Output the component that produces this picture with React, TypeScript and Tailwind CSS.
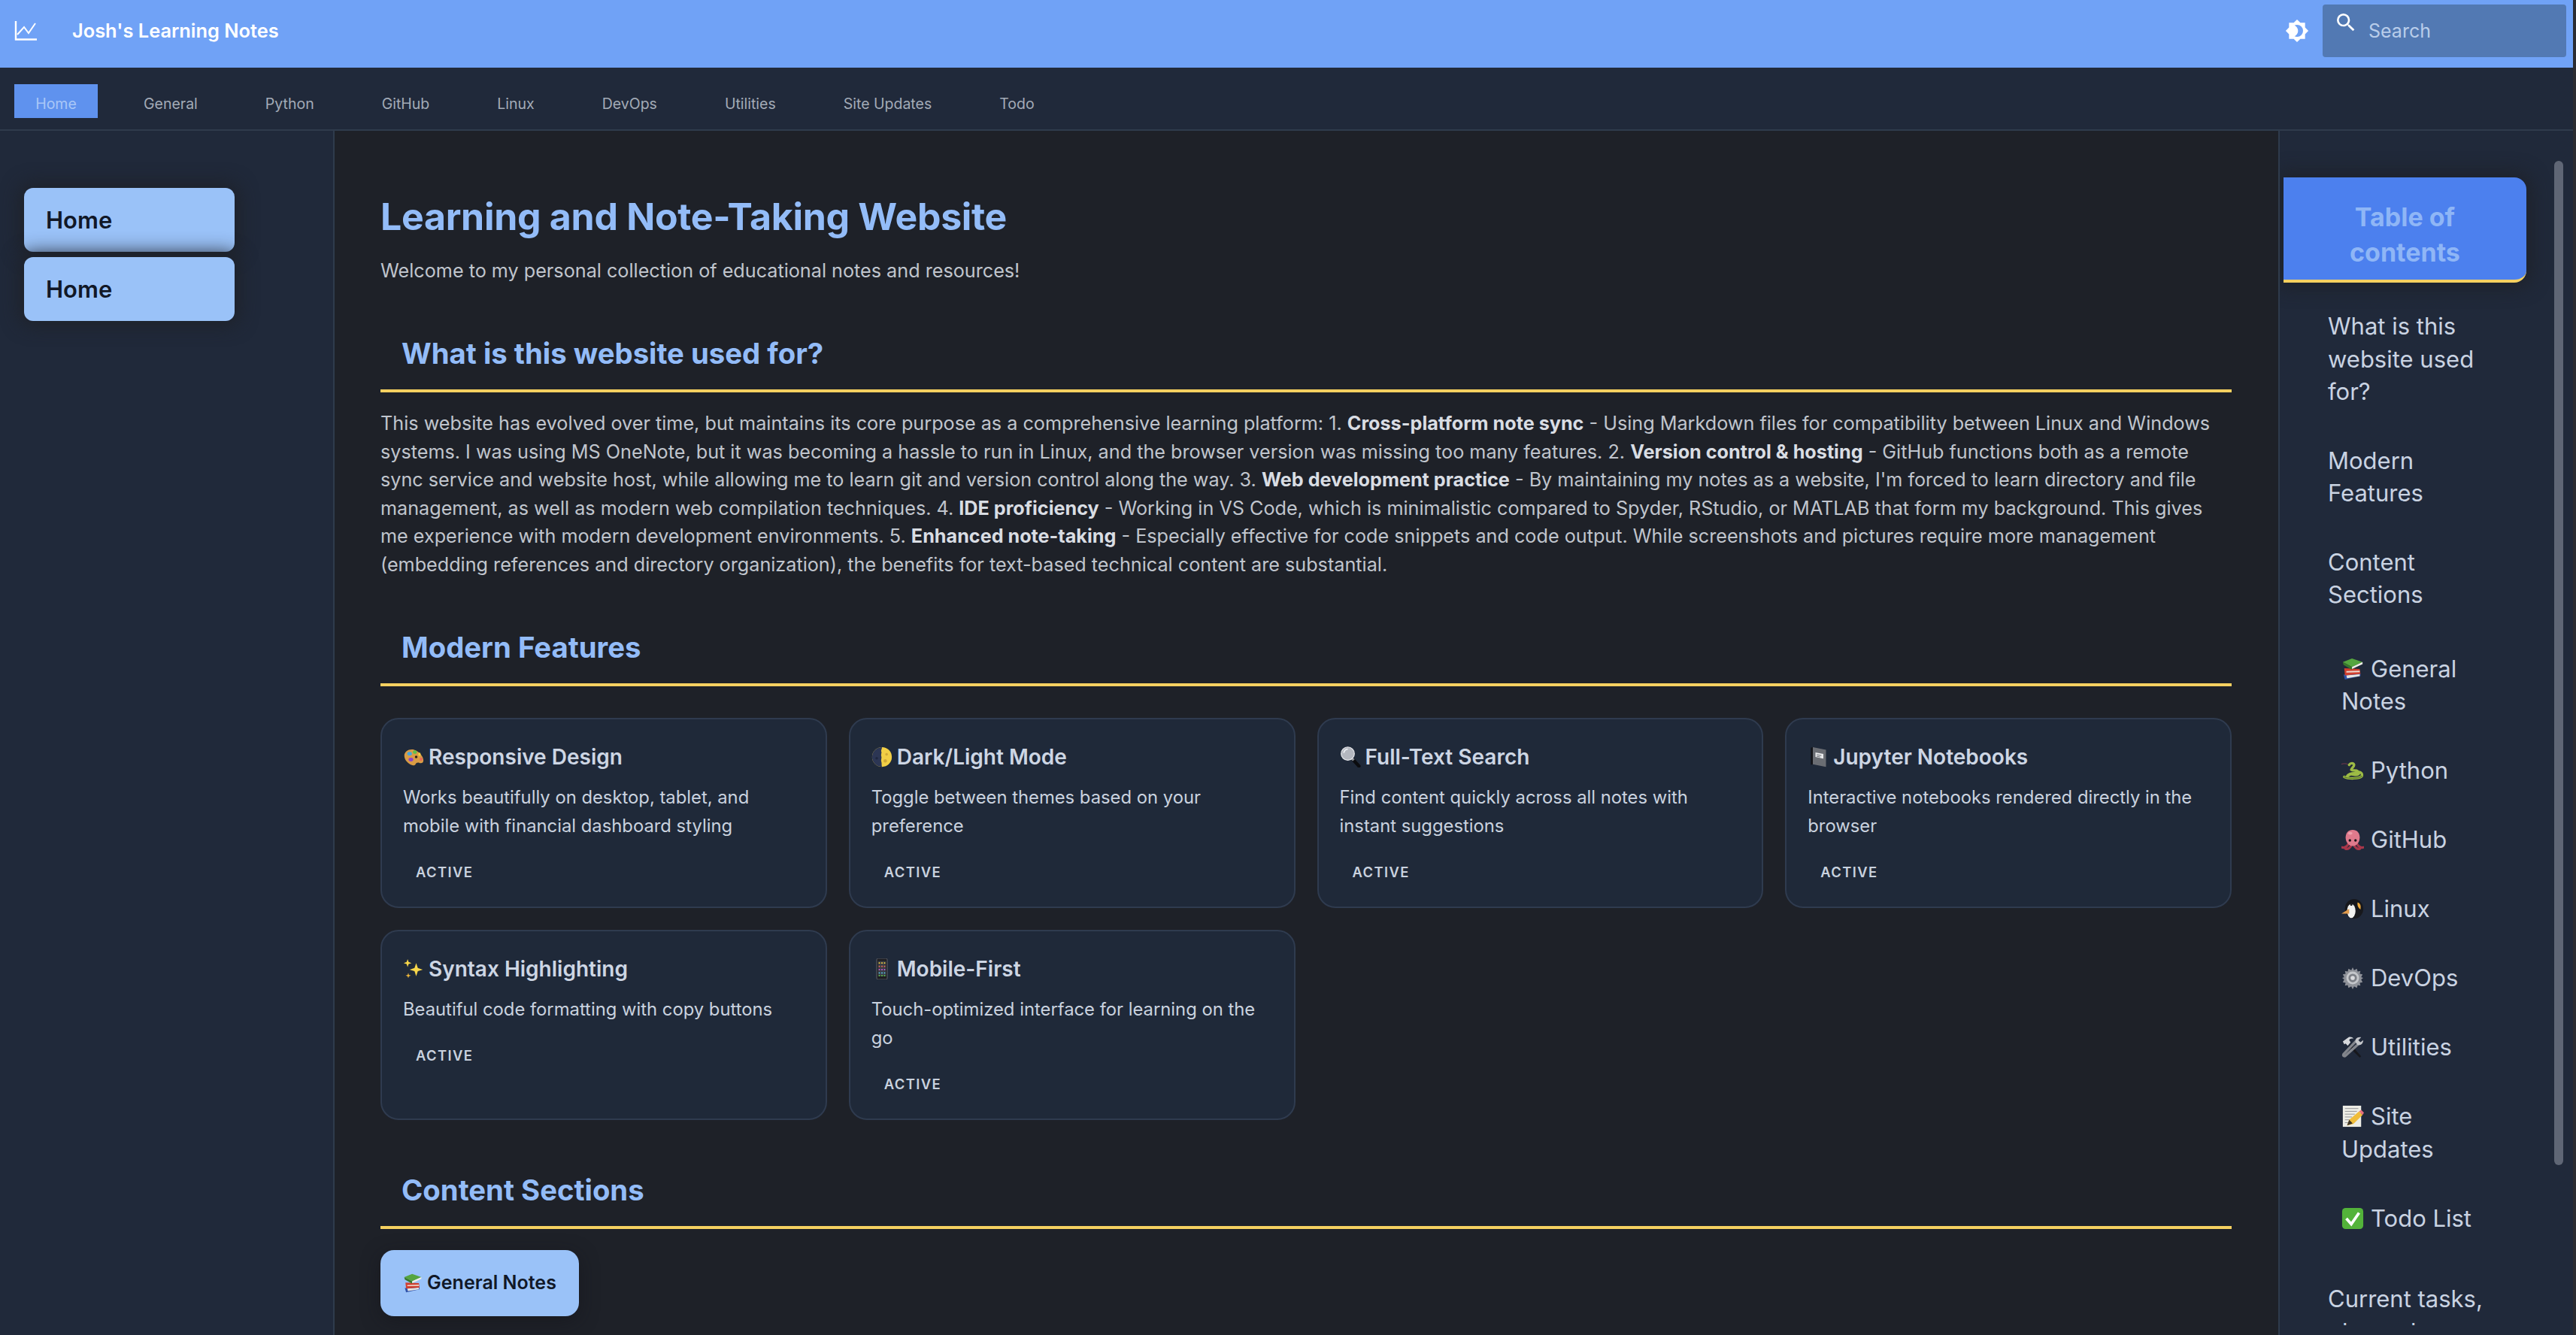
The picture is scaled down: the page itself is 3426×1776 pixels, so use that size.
import type { ReactNode } from "react";

const FONT = { fontFamily: "Inter, 'Noto Sans', sans-serif" };

function Emoji({ size, className, children }: { size: number; className?: string; children: ReactNode }) {
  return (
    <svg
      viewBox="0 0 32 32"
      width={size}
      height={size}
      className={`inline-block align-[-4px] ${className ?? ""}`}
    >
      {children}
    </svg>
  );
}

const palette = (
  <>
    <path d="M2 14C2 7 10 3 17 5c7 2 14 10 14 16 0 4-3 5-6 4-3-1-5 0-6 2-2 3-6 2-10-1-4-3-7-7-7-12z" fill="#d99c45" />
    <ellipse cx="10" cy="11" rx="3.600" ry="2.800" fill="#45a5e0" />
    <ellipse cx="18" cy="8.500" rx="3" ry="2.600" fill="#5fbf4c" />
    <ellipse cx="12" cy="20" rx="3.600" ry="2.800" fill="#8a43c8" />
    <ellipse cx="25" cy="12" rx="1.800" ry="2.600" fill="#f0cf40" />
    <ellipse cx="27.500" cy="19.500" rx="2.200" ry="2.600" fill="#e86a5a" />
    <circle cx="20" cy="16" r="2" fill="#2a2118" />
  </>
);

const moon = (
  <>
    <circle cx="16" cy="16" r="15" fill="#f2cf45" />
    <path d="M16 1a15 15 0 0 0 0 30c-1-3 0-5-1-8s1-5 0-8 1-5 0-7 1-4 1-7z" fill="#2c3654" />
    <circle cx="23" cy="12" r="2" fill="#d0a838" />
    <circle cx="21" cy="22" r="2.600" fill="#d0a838" />
    <circle cx="8" cy="18" r="2" fill="#1e2740" />
  </>
);

const magnifier = (
  <>
    <path d="M20 20l9 10" stroke="#0b0c0f" strokeWidth="5" strokeLinecap="round" />
    <path d="M18 18l3 3" stroke="#8d9097" strokeWidth="4" />
    <circle cx="12" cy="11" r="10" fill="#b4b7bf" stroke="#e4e5e9" strokeWidth="1.500" />
    <path d="M6 10a6 6 0 0 1 6-6" stroke="#eceef2" strokeWidth="2" fill="none" />
  </>
);

const notebook = (
  <>
    <path d="M8 1l20 4v26L8 27z" fill="#6a6d73" />
    <path d="M5 2l3-1v26l-3 1z" fill="#121317" />
    <path d="M12 9l12 2.500v7L12 16z" fill="#e9eaec" />
    <path d="M14 12.500l7 1.500M14 15l5 1" stroke="#55585e" strokeWidth="1" />
  </>
);

const sparkles = (
  <>
    <path d="M20 7l2.500 7.500L30 17l-7.500 2.500L20 27l-2.500-7.500L10 17l7.500-2.500z" fill="#f7d64a" />
    <path d="M7 1l1.500 4.500L13 7l-4.500 1.500L7 13 5.500 8.500 1 7l4.500-1.500z" fill="#f7d64a" />
    <path d="M8 22l1 3 3 1-3 1-1 3-1-3-3-1 3-1z" fill="#f2b93a" />
  </>
);

const mobile = (
  <>
    <rect x="8" y="0" width="16" height="32" rx="2" fill="#1d1e22" stroke="#686a70" strokeWidth="1" />
    <rect x="10" y="4" width="12" height="23" fill="#3a3d44" />
    <path d="M11 7h2M15 7h2M19 7h2" stroke="#f0cf40" strokeWidth="2" />
    <path d="M11 12h2M15 12h2M19 12h2" stroke="#e86a5a" strokeWidth="2" />
    <path d="M11 17h2M15 17h2M19 17h2" stroke="#c05ad8" strokeWidth="2" />
    <path d="M11 22h2M15 22h2M19 22h2" stroke="#58c0e8" strokeWidth="2" />
    <path d="M11 26h2M15 26h2M19 26h2" stroke="#5fbf4c" strokeWidth="2" />
  </>
);

const books = (
  <>
    <path d="M3 24l24-2v4L5 31z" fill="#2f52a8" />
    <path d="M7 25l19-1.500V26L8 29z" fill="#e8e6e0" />
    <path d="M4 15l22 1 1 7-22 2z" fill="#d13f2e" />
    <path d="M7 19l19-.500v2L7 21z" fill="#ecd9cf" />
    <path d="M2 6l13-5 15 5-15 7z" fill="#55a53f" />
    <path d="M2 6l13 7v4L3 10z" fill="#37772b" />
    <path d="M15 13l15-7v3l-15 7z" fill="#f1efe8" />
  </>
);

const snake = (
  <>
    <path
      d="M4 25c6 3 21 3 25-1 1-3-1-6-4-6 1 3-2 5-7 4-3-1-6-1-8 1M8 25c1-4 7-5 10-5 4 0 6-1 5-3-2-2-7 0-9-2 0-2 4-4 4-7-1-3-5-3-7 0"
      fill="none"
      stroke="#9dbb45"
      strokeWidth="3.600"
      strokeLinecap="round"
    />
    <path d="M4 25c6 3 21 3 25-1" fill="none" stroke="#5f7f28" strokeWidth="1.200" strokeLinecap="round" />
    <path d="M0 7c3-1 6-1 9 0" stroke="#7b3a4c" strokeWidth="1" fill="none" />
  </>
);

const octopus = (
  <>
    <path d="M1 27c3 1 7-1 9-5M31 27c-3 1-7-1-9-5M6 29c3 1 7-1 8-6M26 29c-3 1-7-1-8-6" stroke="#a8374a" strokeWidth="3.500" fill="none" strokeLinecap="round" />
    <path d="M6 13C6 6 10 2 16 2s10 4 10 11c0 6-4 12-10 12S6 19 6 13z" fill="#df7a8c" />
    <ellipse cx="12.500" cy="7" rx="3" ry="2" fill="#eda0ac" />
    <circle cx="12" cy="17" r="1.800" fill="#1a1418" />
    <circle cx="20" cy="17" r="1.800" fill="#1a1418" />
  </>
);

const penguin = (
  <>
    <ellipse cx="18" cy="16" rx="13" ry="14" fill="#17181c" />
    <ellipse cx="14" cy="19" rx="6" ry="10" fill="#f1f1ef" />
    <circle cx="14" cy="10" r="1.600" fill="#17181c" />
    <path d="M0 23l11-7v7z" fill="#e09a4c" />
    <path d="M23 7c4 1 5 5 4 10-3-2-5-6-4-10z" fill="#eda83a" />
  </>
);

const gear = (
  <>
    <path
      d="M16 1l2 4 4-2 1 4 4-1-1 4 4 1-2 4 3 1-3 2 2 4-4 1 1 4-4-1-1 4-4-2-2 4-2-4-4 2-1-4-4 1 1-4-4-1 2-4-3-2 3-1-2-4 4-1-1-4 4 1 1-4 4 2z"
      fill="#8f9299"
    />
    <circle cx="16" cy="16" r="9" fill="#c4c6ca" />
    <circle cx="16" cy="16" r="6" fill="#7c7f86" />
    <circle cx="16" cy="16" r="3" fill="#dadbde" />
  </>
);

const tools = (
  <>
    <path d="M13 12L28 29l-2 2L10 15z" fill="#17181c" />
    <path d="M2 8l8-6c3-1 6 0 7 2-3-1-5 0-6 2l2 3-4 5-3-3-2 1z" fill="#d6d8dc" />
    <path d="M25 11L6 28c-2 2-4 0-3-2L21 7" stroke="#82858c" strokeWidth="3.500" fill="none" />
    <path d="M20 9c-1-4 2-8 8-7l-4 4 3 3 4-3c0 5-4 8-8 7z" fill="#c4c6ca" />
  </>
);

const memo = (
  <>
    <rect x="2" y="1" width="26" height="30" fill="#ededE6" />
    <path d="M5 5h19M5 9h17M5 13h14M5 17h10M5 21h8M5 25h6" stroke="#8e8f92" strokeWidth="1" />
    <path d="M8 29l3-8L25 9l5 5-13 13z" fill="#f0bd3a" />
    <path d="M25 9l3-2 4 4-2 3z" fill="#e76f7e" />
    <path d="M8 29l3-8 5 5z" fill="#3c3428" />
  </>
);

const check = (
  <>
    <rect x="1" y="1" width="30" height="30" rx="5" fill="#53b33a" />
    <path d="M7 16l7 8L25 8" stroke="#fff" strokeWidth="4" fill="none" />
  </>
);

function SectionTitle({ children, className }: { children: ReactNode; className: string }) {
  return (
    <h2 className={`border-b-4 border-[#f5d060] pb-[25px] pl-[28px] text-[38.300px] leading-[46px] font-bold text-[#93bcf8] ${className}`}>
      {children}
    </h2>
  );
}

function FeatureCard({ icon, title, desc }: { icon: ReactNode; title: string; desc: string }) {
  return (
    <div className="h-[253px] rounded-[24px] border-2 border-[#2f3b4f] bg-[#1f2939] px-[28px] pt-[32px]">
      <h3 className="text-[28px] leading-[36px] font-semibold text-[#cdd6e4]">
        <Emoji size={28} className="mr-[6px]">{icon}</Emoji>
        {title}
      </h3>
      <p className="mt-[17px] text-[23.800px] leading-[38px] text-[#c9d2df]">{desc}</p>
      <span className="mt-[30px] ml-[17px] block text-[18.400px] leading-[24px] font-semibold tracking-[1.400px] text-[#c9d2df]">
        ACTIVE
      </span>
    </div>
  );
}

const features = [
  { icon: palette, title: "Responsive Design", desc: "Works beautifully on desktop, tablet, and mobile with financial dashboard styling" },
  { icon: moon, title: "Dark/Light Mode", desc: "Toggle between themes based on your preference" },
  { icon: magnifier, title: "Full-Text Search", desc: "Find content quickly across all notes with instant suggestions" },
  { icon: notebook, title: "Jupyter Notebooks", desc: "Interactive notebooks rendered directly in the browser" },
  { icon: sparkles, title: "Syntax Highlighting", desc: "Beautiful code formatting with copy buttons" },
  { icon: mobile, title: "Mobile-First", desc: "Touch-optimized interface for learning on the go" },
];

const navItems = ["General", "Python", "GitHub", "Linux", "DevOps", "Utilities", "Site Updates", "Todo"];

const tocSub = [
  { icon: books, label: "General Notes", cls: "mt-[55px]" },
  { icon: snake, label: "Python", cls: "mt-[48.500px]" },
  { icon: octopus, label: "GitHub", cls: "mt-[48.500px]" },
  { icon: penguin, label: "Linux", cls: "mt-[48.500px]" },
  { icon: gear, label: "DevOps", cls: "mt-[48.500px]" },
  { icon: tools, label: "Utilities", cls: "mt-[48.500px]" },
  { icon: memo, label: "Site Updates", cls: "mt-[48.500px]" },
  { icon: check, label: "Todo List", cls: "mt-[48.500px]" },
];

function SideButton({ className }: { className?: string }) {
  return (
    <a className={`relative flex h-[85px] w-[280px] items-center rounded-[12px] bg-[#9ac2f8] pt-[2px] pl-[29px] text-[31px] font-semibold text-[#111827] shadow-[0_0_24px_6px_rgba(30,33,40,0.9)] ${className ?? ""}`}>
      Home
    </a>
  );
}

export default function App() {
  return (
    <div style={FONT} className="flex h-[1776px] overflow-hidden bg-[#2b2c31]">
      <div className="flex w-[3422px] flex-col">
        <header className="flex h-[90px] shrink-0 items-center bg-[#70a2f6] pb-[8px] pl-[19px]">
          <svg viewBox="0 0 30 26" width="30" height="26" fill="none" stroke="#fff" strokeWidth="2.400">
            <path d="M2 0v24.500h28" />
            <path d="M4 18l9-10 6 8 9-13" strokeWidth="2" />
          </svg>
          <span className="ml-[47px] text-[25.400px] font-semibold text-white">Josh's Learning Notes</span>
          <svg viewBox="0 0 24 24" width="32" height="32" fill="#fff" className="mr-[18px] ml-auto">
            <path d="M12,18C11.11,18 10.26,17.8 9.5,17.45C11.56,16.5 13,14.42 13,12C13,9.58 11.56,7.5 9.5,6.55C10.26,6.2 11.11,6 12,6A6,6 0 0,1 18,12A6,6 0 0,1 12,18M20,8.69V4H15.31L12,0.69L8.69,4H4V8.69L0.69,12L4,15.31V20H8.69L12,23.31L15.31,20H20V15.31L23.31,12L20,8.69Z" />
          </svg>
          <div className="mr-[9px] flex h-[70px] w-[324px] rounded-[4px] bg-[#5279b3]">
            <svg viewBox="0 0 24 24" width="32" height="32" fill="#fff" className="mt-[8px] ml-[15px]">
              <path d="M9.5,3A6.5,6.5 0 0,1 16,9.5C16,11.11 15.41,12.59 14.44,13.73L14.71,14H15.5L20.5,19L19,20.5L14,15.5V14.71L13.730,14.44C12.59,15.41 11.11,16 9.5,16A6.5,6.5 0 0,1 3,9.5A6.5,6.5 0 0,1 9.5,3M9.500,5C7,5 5,7 5,9.500C5,12 7,14 9.500,14C12,14 14,12 14,9.500C14,7 12,5 9.500,5Z" />
            </svg>
            <span className="mt-[20px] ml-[14px] text-[25px] leading-[30px] text-[#b9cdea]">Search</span>
          </div>
        </header>

        <nav className="flex h-[84px] shrink-0 items-start border-b-2 border-[#2f3b4c] bg-[#20293a] pt-[22px] pl-[19px] text-[19.500px] text-[#a3abb7]">
          <a className="flex h-[45px] w-[111px] items-center justify-center bg-[#5f92ee] pt-[8px] text-[#a9c7f7]">Home</a>
          <div className="ml-[61px] flex h-[45px] items-center gap-[90px] pt-[8px]">
            {navItems.map((item) => (
              <a key={item}>{item}</a>
            ))}
          </div>
        </nav>

        <div className="flex min-h-0 flex-1">
          <aside className="w-[445px] shrink-0 border-r-2 border-[#2f3b4c] bg-[#20293a] pt-[76px] pl-[32px]">
            <SideButton />
            <SideButton className="mt-[7px]" />
          </aside>

          <main className="min-w-0 flex-1 overflow-hidden bg-[#1e2128] pt-[84px] pr-[62px] pl-[61px]">
            <h1 className="text-[50px] leading-[60px] font-bold tracking-[-0.300px] text-[#93bcf8]">Learning and Note-Taking Website</h1>
            <p className="mt-[23px] text-[25.200px] leading-[38px] text-[#c0c5cd]">
              Welcome to my personal collection of educational notes and resources!
            </p>

            <SectionTitle className="mt-[68px]">What is this website used for?</SectionTitle>
            <p className="mt-[23px] text-[25.200px] leading-[37.600px] text-[#c0c5cd]">
              This website has evolved over time, but maintains its core purpose as a comprehensive learning platform: 1.{" "}
              <strong className="font-bold text-[#d9dde3]">Cross-platform note sync</strong> - Using Markdown files for compatibility between Linux and Windows systems. I was using MS OneNote, but it was becoming a hassle to run in Linux, and the browser version was missing too many features. 2.{" "}
              <strong className="font-bold text-[#d9dde3]">Version control &amp; hosting</strong> - GitHub functions both as a remote sync service and website host, while allowing me to learn git and version control along the way. 3.{" "}
              <strong className="font-bold text-[#d9dde3]">Web development practice</strong> - By maintaining my notes as a website, I'm forced to learn directory and file management, as well as modern web compilation techniques. 4.{" "}
              <strong className="font-bold text-[#d9dde3]">IDE proficiency</strong> - Working in VS Code, which is minimalistic compared to Spyder, RStudio, or MATLAB that form my background. This gives me experience with modern development environments. 5.{" "}
              <strong className="font-bold text-[#d9dde3]">Enhanced note-taking</strong> - Especially effective for code snippets and code output. While screenshots and pictures require more management (embedding references and directory organization), the benefits for text-based technical content are substantial.
            </p>

            <SectionTitle className="mt-[67px]">Modern Features</SectionTitle>
            <div className="mt-[42px] grid grid-cols-4 gap-[29px]">
              {features.map((f) => (
                <FeatureCard key={f.title} icon={f.icon} title={f.title} desc={f.desc} />
              ))}
            </div>

            <SectionTitle className="mt-[70px]">Content Sections</SectionTitle>
            <a className="mt-[28px] flex h-[88px] w-[264px] items-center justify-center rounded-[18px] bg-[#9ac2f8] text-[25px] font-semibold text-[#111827] shadow-[0_6px_24px_rgba(20,20,25,0.5)]">
              <Emoji size={26} className="mr-[6px]">{books}</Emoji>
              General Notes
            </a>
          </main>

          <aside className="relative w-[392px] shrink-0 overflow-hidden border-l-2 border-[#2f3b4c] bg-[#20293a] pt-[62px] text-[31px] leading-[43.500px] text-[#c9d3e2]">
            <div className="ml-[5px] w-[323px] rounded-r-[16px] border-b-4 border-[#f5d060] bg-[#4c80ee] px-[30px] pt-[29px] pb-[13px] text-center text-[34px] leading-[47px] font-bold text-[#8fb6f6] shadow-[0_0_24px_6px_rgba(30,33,40,0.9)]">
              Table of contents
            </div>
            <div className="h-[1387px] overflow-hidden pt-[36px] pr-[112px] pl-[64px]">
              <p>What is this website used for?</p>
              <p className="mt-[48px]">Modern Features</p>
              <p className="mt-[48px]">Content Sections</p>
              <div className="pl-[18px]">
                {tocSub.map((item) => (
                  <p key={item.label} className={item.cls}>
                    <Emoji size={30} className="mr-[9px]">{item.icon}</Emoji>
                    {item.label}
                  </p>
                ))}
              </div>
              <p className="mt-[64px]">Current tasks, planned features</p>
            </div>
            <div className="absolute top-[40px] right-[13px] h-[1336px] w-[12px] rounded-[6px] bg-[#5f6675]" />
          </aside>
        </div>
      </div>
    </div>
  );
}
